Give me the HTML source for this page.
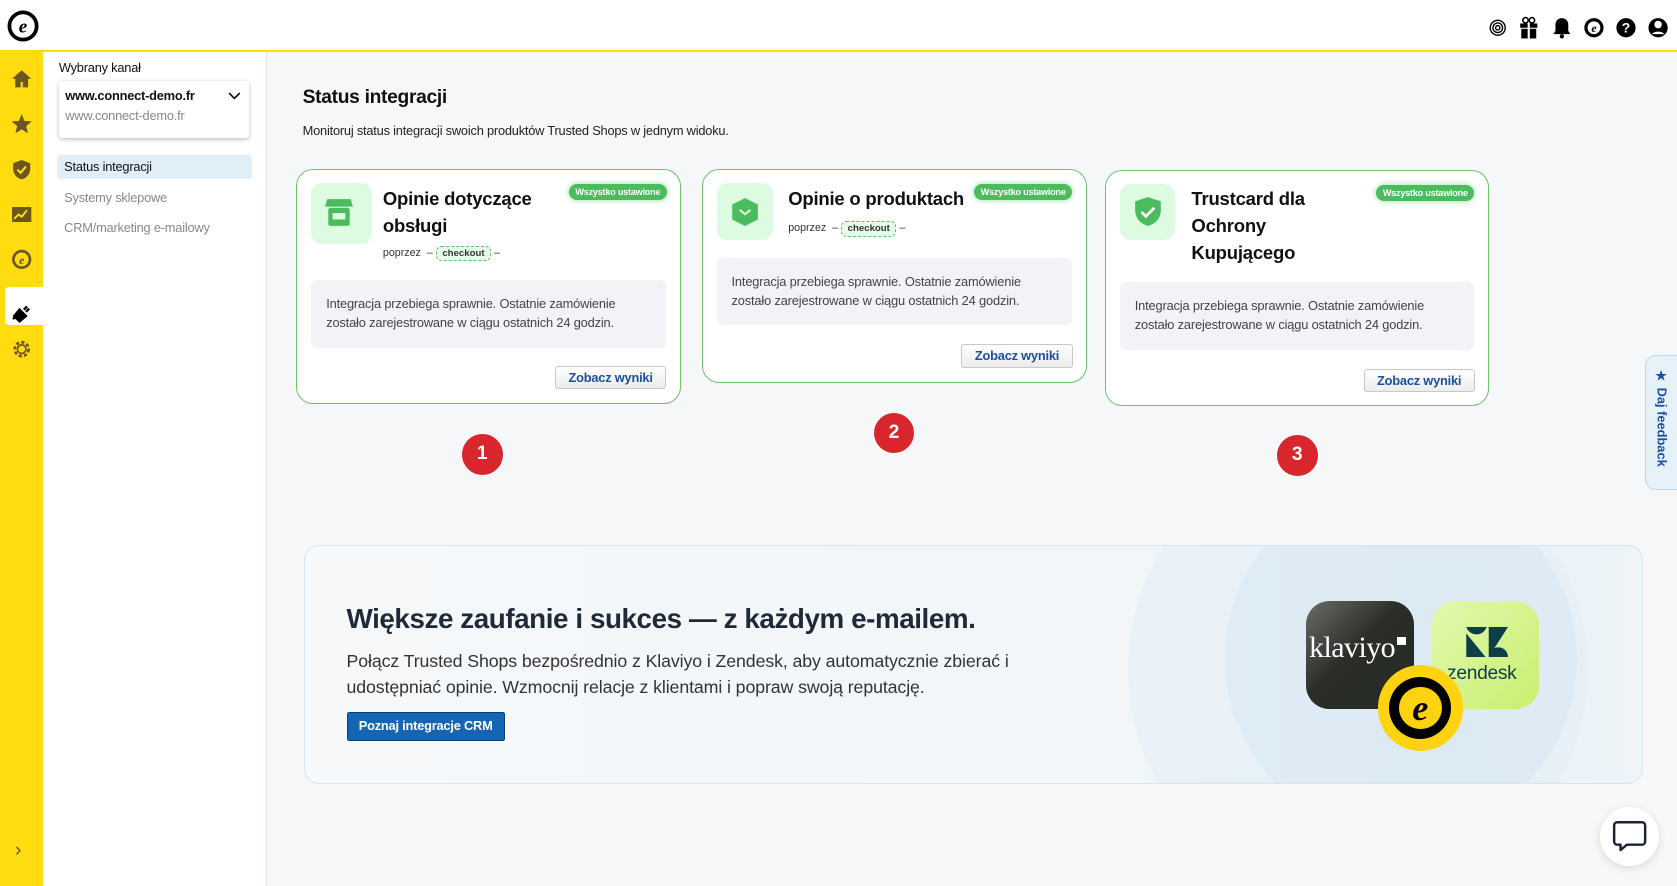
<!DOCTYPE html>
<html><head><meta charset="utf-8"><style>
html,body{margin:0;padding:0;overflow:hidden;width:1677px;height:886px;background:#f5f7f9}
#w{zoom:1.0695;width:1568px;height:829px;position:relative;font-family:"Liberation Sans",Arial,sans-serif;color:#111}
.a{position:absolute}
.hdr{left:0;top:0;width:1568px;height:47px;background:#fff;border-bottom:2px solid #ffdc0f}
.side{left:0;top:49px;width:40px;height:780px;background:#ffdc0f}
.nav{left:40px;top:49px;width:209px;height:780px;background:#fff;border-right:1px solid #e3e6ea}
.card{background:#fff;border:1.5px solid #6cc36c;border-radius:16px;box-sizing:border-box}
.ic{width:52px;height:52px;border-radius:10px;background:#dcfbe0}
.badge{background:#4cbb5e;color:#fff;font-size:8.5px;font-weight:bold;padding:3px 6px;border-radius:9px;box-shadow:0 0 6px #8fdc9b;letter-spacing:-.2px}
.title{font-size:17.3px;font-weight:bold;line-height:25px;letter-spacing:-.2px}
.via{font-size:10px;color:#333}
.chk{display:inline-block;font-size:9px;font-weight:bold;border:1px dashed #5cc06c;background:#e6fbe9;border-radius:5px;padding:1px 5px;margin:0 3px}
.box{background:#f2f3f7;border-radius:6px;font-size:12px;color:#444;line-height:18px;padding:13px 14px;box-sizing:border-box;letter-spacing:-.15px}
.btn{border:1px solid #c8c8c8;background:linear-gradient(#fff,#ececec);border-radius:3px;font-size:12px;font-weight:bold;color:#1d4fa0;text-align:center;line-height:20px;width:102px;height:20px;letter-spacing:-.2px}
.num{width:38px;height:38px;border-radius:50%;background:#d8262c;color:#fff;font-weight:bold;font-size:18px;text-align:center;line-height:38px;border:1px solid #fff}
</style></head><body><div id="w">
<div class="a hdr"></div>
<svg class="a" style="left:7px;top:9px" width="30" height="30" viewBox="0 0 30 30"><circle cx="15" cy="15" r="14.5" fill="#000"/><circle cx="15" cy="15" r="11" fill="#fff"/><text x="15" y="21" font-size="18" font-style="italic" font-family="Liberation Serif" font-weight="bold" text-anchor="middle">e</text></svg>
<svg class="a" style="left:1390px;top:15px" width="170" height="22" viewBox="0 0 170 22">
<g fill="none" stroke="#000" stroke-width="1.3"><circle cx="10" cy="11" r="7"/><circle cx="10" cy="11" r="4.5"/><circle cx="10" cy="11" r="2"/></g>
<rect x="31" y="7" width="16" height="4" fill="#000"/><rect x="32" y="12" width="14" height="9" fill="#000"/><rect x="38" y="6" width="2" height="15" fill="#fff"/><circle cx="36" cy="4" r="2.5" fill="none" stroke="#000" stroke-width="1.5"/><circle cx="42" cy="4" r="2.5" fill="none" stroke="#000" stroke-width="1.5"/>
<path d="M70 2a6 6 0 0 1 6 6v6l2 3h-16l2-3v-6a6 6 0 0 1 6-6z" fill="#000"/><circle cx="70" cy="19" r="2" fill="#000"/>
<circle cx="100" cy="11" r="9" fill="#000"/><circle cx="100" cy="11" r="6" fill="#fff"/><text x="100" y="15" font-size="11" font-style="italic" font-weight="bold" font-family="Liberation Serif" text-anchor="middle">e</text>
<circle cx="130" cy="11" r="9" fill="#000"/><text x="130" y="15.5" font-size="13" font-weight="bold" fill="#fff" text-anchor="middle">?</text>
<circle cx="160" cy="11" r="9" fill="#000"/><circle cx="160" cy="8" r="3.5" fill="#fff"/><path d="M154 17a7 5 0 0 1 12 0" fill="#fff"/>
</svg>
<div class="a side"></div>
<div class="a" style="left:5px;top:268px;width:35px;height:36px;background:#fff;border-radius:4px 0 0 4px"></div>
<svg class="a" style="left:10px;top:64px" width="20" height="280" viewBox="0 0 20 280" fill="#6b5521">
<path d="M10 2L1 10h3v8h5v-5h2v5h5v-8h3z"/>
<path d="M10 43l2.6 6.5 6.9.4-5.3 4.4 1.7 6.7L10 57.3 4.1 61l1.7-6.7L.5 49.9l6.9-.4z"/>
<path d="M10 86l8 3v5c0 5-3.5 9-8 10-4.5-1-8-5-8-10v-5z"/><path d="M6 95l3 3 5-6" stroke="#ffdc0f" stroke-width="2" fill="none"/>
<rect x="1" y="130" width="18" height="14"/><path d="M3 141l4-4 3 2 5-6" stroke="#ffdc0f" stroke-width="1.8" fill="none"/>
<circle cx="10" cy="179" r="9"/><circle cx="10" cy="179" r="6.5" fill="#ffdc0f"/><text x="10" y="183.5" font-size="11" font-style="italic" font-weight="bold" font-family="Liberation Serif" text-anchor="middle">e</text>
<path d="M3 232l5-6 6 6-6 5z M12 226l3-3 M14 228l3-3 M4 232l-2 3" stroke="#000" stroke-width="2.2" fill="#000"/>
<circle cx="10" cy="263" r="6.5" fill="none" stroke="#6b5521" stroke-width="2.5" stroke-dasharray="3 2"/><circle cx="10" cy="263" r="4" fill="none" stroke="#6b5521" stroke-width="1.6"/>
</svg>
<div class="a" style="left:14px;top:785px;font-size:18px;color:#6b5521">&#8250;</div>
<div class="a nav"></div>
<div class="a" style="left:55px;top:56px;font-size:12px;letter-spacing:-.2px">Wybrany kanał</div>
<div class="a" style="left:55px;top:76px;width:178px;height:53px;background:#fff;border-radius:3px;box-shadow:0 1px 4px rgba(0,0,0,.25)"></div>
<div class="a" style="left:61px;top:82px;font-size:12px;font-weight:bold;letter-spacing:-.2px">www.connect-demo.fr</div>
<div class="a" style="left:61px;top:101px;font-size:12px;color:#888;letter-spacing:-.2px">www.connect-demo.fr</div>
<svg class="a" style="left:213px;top:86px" width="12" height="8"><path d="M1 1l5 5 5-5" stroke="#000" stroke-width="1.5" fill="none"/></svg>
<div class="a" style="left:53px;top:145px;width:183px;height:22px;background:#e0eef7;border-radius:3px"></div>
<div class="a" style="left:60px;top:149px;font-size:12px;letter-spacing:-.2px">Status integracji</div>
<div class="a" style="left:60px;top:178px;font-size:12px;color:#888;letter-spacing:-.2px">Systemy sklepowe</div>
<div class="a" style="left:60px;top:206px;font-size:12px;color:#888;letter-spacing:-.2px">CRM/marketing e-mailowy</div>

<div class="a" style="left:283px;top:81px;font-size:18px;font-weight:bold;letter-spacing:-.3px">Status integracji</div>
<div class="a" style="left:283px;top:115px;font-size:12px;color:#222;letter-spacing:-.2px">Monitoruj status integracji swoich produktów Trusted Shops w jednym widoku.</div>

<div class="a card" style="left:277px;top:158px;width:360px;height:220px"></div>
<div class="a ic" style="left:291px;top:171px;width:57px;height:57px"></div>
<svg class="a" style="left:303px;top:184px" width="28" height="30"><path d="M3 2h22l2 7H1z" fill="#4cbb5e"/><rect x="4" y="10" width="20" height="17" rx="2" fill="#4cbb5e"/><rect x="8" y="15" width="12" height="6" fill="#dcfbe0"/></svg>
<div class="a title" style="left:358px;top:174px">Opinie dotyczące<br>obsługi</div>
<div class="a badge" style="left:532px;top:172px">Wszystko ustawione</div>
<div class="a via" style="left:358px;top:230px">poprzez &nbsp;–<span class="chk">checkout</span>–</div>
<div class="a box" style="left:291px;top:262px;width:332px;height:63px">Integracja przebiega sprawnie. Ostatnie zamówienie zostało zarejestrowane w ciągu ostatnich 24 godzin.</div>
<div class="a btn" style="left:519px;top:342px">Zobacz wyniki</div>
<div class="a num" style="left:431px;top:405px">1</div>

<div class="a card" style="left:656px;top:158px;width:360px;height:200px"></div>
<div class="a ic" style="left:670px;top:171px;width:53px;height:53px"></div>
<svg class="a" style="left:682px;top:183px" width="30" height="30"><path d="M15 2l12 6v14l-12 6-12-6V8z" fill="#4cbb5e"/><path d="M10 13l5 4 5-4" stroke="#dcfbe0" stroke-width="2" fill="none"/></svg>
<div class="a title" style="left:737px;top:174px">Opinie o produktach</div>
<div class="a badge" style="left:911px;top:172px">Wszystko ustawione</div>
<div class="a via" style="left:737px;top:207px">poprzez &nbsp;–<span class="chk">checkout</span>–</div>
<div class="a box" style="left:670px;top:241px;width:332px;height:63px">Integracja przebiega sprawnie. Ostatnie zamówienie zostało zarejestrowane w ciągu ostatnich 24 godzin.</div>
<div class="a btn" style="left:899px;top:322px">Zobacz wyniki</div>
<div class="a num" style="left:816px;top:385px">2</div>

<div class="a card" style="left:1033px;top:159px;width:359px;height:221px"></div>
<div class="a ic" style="left:1047px;top:172px;width:52px;height:52px"></div>
<svg class="a" style="left:1059px;top:183px" width="28" height="30"><path d="M14 1l12 4v8c0 8-5 13-12 15C7 26 2 21 2 13V5z" fill="#4cbb5e"/><path d="M8 15l4 4 8-8" stroke="#fff" stroke-width="2.5" fill="none"/></svg>
<div class="a title" style="left:1114px;top:174px">Trustcard dla<br>Ochrony<br>Kupującego</div>
<div class="a badge" style="left:1287px;top:173px">Wszystko ustawione</div>
<div class="a box" style="left:1047px;top:264px;width:331px;height:63px">Integracja przebiega sprawnie. Ostatnie zamówienie zostało zarejestrowane w ciągu ostatnich 24 godzin.</div>
<div class="a btn" style="left:1275px;top:345px">Zobacz wyniki</div>
<div class="a num" style="left:1193px;top:406px">3</div>

<div class="a" style="left:284px;top:510px;width:1252px;height:223px;border:1px solid #d6e6f1;border-radius:14px;background:linear-gradient(90deg,#f6f8fa 0%,#f2f6f9 60%,#e8f1f7 85%,#eef4f8 100%);box-sizing:border-box;overflow:hidden">
<div class="a" style="left:770px;top:-100px;width:430px;height:430px;border-radius:50%;background:rgba(215,232,244,.25)"></div>
<div class="a" style="left:860px;top:-60px;width:330px;height:330px;border-radius:50%;background:rgba(205,226,241,.35)"></div>
</div>
<div class="a" style="left:324px;top:564px;font-size:26px;font-weight:bold;color:#1f2937;letter-spacing:-.4px">Większe zaufanie i sukces — z każdym e-mailem.</div>
<div class="a" style="left:324px;top:607px;font-size:16.6px;line-height:24px;color:#333;letter-spacing:-.1px">Połącz Trusted Shops bezpośrednio z Klaviyo i Zendesk, aby automatycznie zbierać i<br>udostępniać opinie. Wzmocnij relacje z klientami i popraw swoją reputację.</div>
<div class="a" style="left:324px;top:666px;width:148px;height:27px;background:#1465b4;border:1px solid #0c3f75;border-radius:2px;box-sizing:border-box;color:#fff;font-size:12px;font-weight:bold;text-align:center;line-height:25px;letter-spacing:-.2px">Poznaj integracje CRM</div>
<div class="a" style="left:1221px;top:562px;width:101px;height:101px;border-radius:22px;background:linear-gradient(135deg,#6a6c68 0%,#2a2d28 45%,#262a24 100%)"></div>
<div class="a" style="left:1224px;top:590px;font-family:'Liberation Serif',serif;font-size:28px;color:#fff;letter-spacing:-.5px">klaviyo</div>
<div class="a" style="left:1306px;top:596px;width:9px;height:7px;background:#fff"></div>
<div class="a" style="left:1339px;top:562px;width:100px;height:101px;border-radius:22px;background:linear-gradient(135deg,#e2f8b0,#c8ef6e)"></div>
<svg class="a" style="left:1367px;top:586px" width="46" height="32"><path d="M4 0h19a10 10 0 0 1-19 0z M25 0h18L25 28z M4 28h18L4 6z M25 28a9 9 0 0 1 18 0z" fill="#0f3e48"/></svg>
<div class="a" style="left:1353px;top:620px;font-size:18px;color:#0f3e48;letter-spacing:-.3px">zendesk</div>
<div class="a" style="left:1288px;top:622px;width:80px;height:80px;border-radius:50%;background:#ffd30f"></div>
<div class="a" style="left:1299px;top:633px;width:58px;height:58px;border-radius:50%;background:#000"></div>
<div class="a" style="left:1308px;top:642px;width:40px;height:40px;border-radius:50%;background:#ffd30f;text-align:center;font:italic bold 34px/40px 'Liberation Serif',serif;color:#000">e</div>

<div class="a" style="left:1538px;top:332px;width:32px;height:124px;background:#e6f1f9;border:1px solid #bcd8ee;border-radius:10px 0 0 10px"></div>
<div class="a" style="left:1547px;top:345px;writing-mode:vertical-rl;font-size:12px;font-weight:bold;color:#1d4fa0">★ Daj feedback</div>
<div class="a" style="left:1496px;top:755px;width:55px;height:55px;border-radius:50%;background:#fff;box-shadow:0 2px 8px rgba(0,0,0,.12)"></div>
<svg class="a" style="left:1507px;top:766px" width="34" height="32"><path d="M5 3h23a3 3 0 0 1 3 3v15a3 3 0 0 1-3 3H14l-6 5v-5H5a3 3 0 0 1-3-3V6a3 3 0 0 1 3-3z" fill="none" stroke="#1a2233" stroke-width="2.3" stroke-linejoin="round"/></svg>
</div></body></html>
